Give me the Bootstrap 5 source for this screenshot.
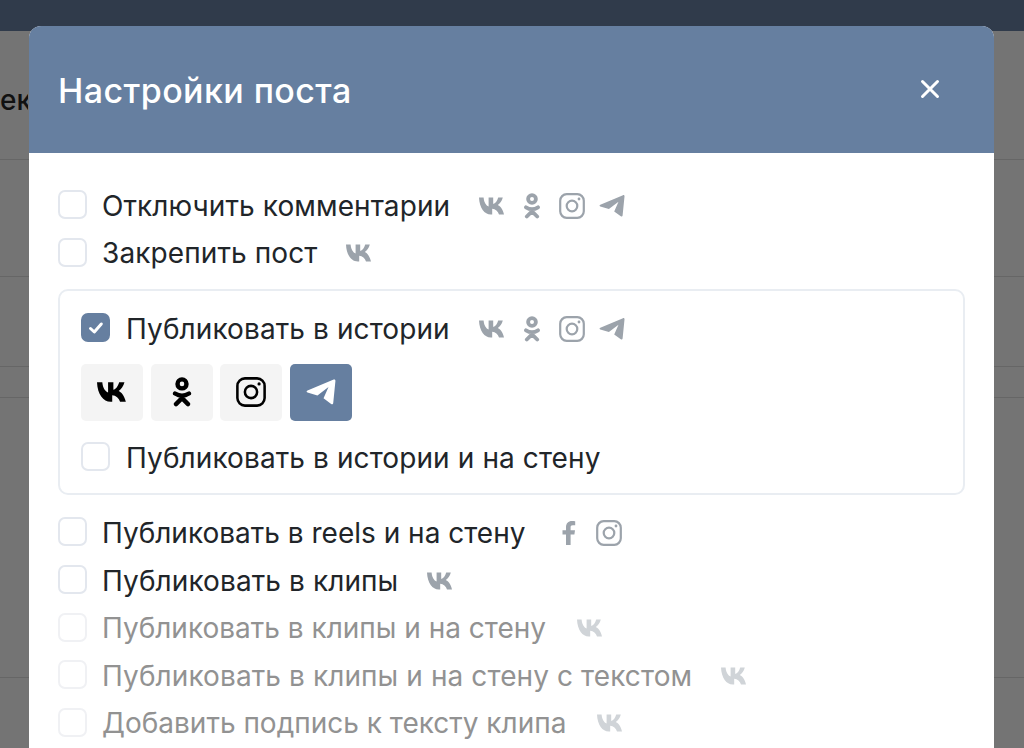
<!DOCTYPE html>
<html lang="ru">
<head>
  <meta charset="UTF-8">
  <title>Настройки поста</title>
  <link href="https://cdn.jsdelivr.net/npm/bootstrap@5.3.2/dist/css/bootstrap.min.css" rel="stylesheet">
  <style>
  html, body {
    height: 100%;
    overflow: hidden;
  }

  body {
    background-color: #747474;
    color: #212529;
    font-family: Inter, "Liberation Sans", sans-serif;
  }

  .top-strip {
    height: 31px;
    background-color: #303b4b;
  }

  .back-word {
    height: 129px;
    padding-top: 48px;
    font-size: 28px;
    font-weight: 500;
    color: #111;
    border-bottom: 1px solid #666;
  }

  .back-word span {
    display: block;
    width: 28px;
    overflow: hidden;
    white-space: nowrap;
  }

  .back-row {
    border-bottom: 1px solid #666;
  }

  .back-row.r1 { height: 117px; }
  .back-row.r2 { height: 90px; }
  .back-row.r3 { height: 31px; }
  .back-row.r4 { height: 280px; }

  .post-dialog {
    top: 26px;
    left: 29px;
    width: 965px;
    height: 800px;
    background-color: #fff;
    border-radius: 12px 12px 0 0;
    overflow: hidden;
  }

  .dialog-head {
    height: 127px;
    padding: 3px 29px 0 29px;
    background-color: #667fa0;
    color: #fff;
  }

  .dialog-head h5 {
    font-size: 34px;
    font-weight: 500;
    letter-spacing: 0.42px;
    margin: 0;
  }

  .close-x {
    margin-right: 25px;
    margin-top: -4px;
  }

  .dialog-body {
    padding: 29px 29px 0 29px;
  }

  .opt-row {
    height: 47.6px;
    font-size: 28px;
    letter-spacing: 0.1px;
    line-height: 1;
  }

  .opt-row.tight {
    letter-spacing: 0;
  }

  .opt-box {
    width: 29px;
    height: 29px;
    flex: none;
    border: 2px solid #e3e7ee;
    border-radius: 7px;
    margin: 0 15px 2px 0;
    background-color: #fff;
  }

  .opt-box.on {
    background-color: #667fa0;
    border-color: #667fa0;
  }

  .opt-row.off {
    color: #929292;
  }

  .opt-row.off .opt-box {
    border-color: #f0f1f4;
  }

  .soc-set {
    margin-left: 29px;
    gap: 14px;
    color: #9ca3ab;
  }

  .opt-row.tight .soc-set {
    margin-left: 31px;
  }

  .opt-row.off .soc-set {
    color: #d0d4d8;
  }

  .soc-set svg {
    width: 26px;
    height: 26px;
    display: block;
  }

  .story-box {
    margin: 12px 0 0 0;
    height: 206px;
    padding: 14px 22px 0 21px;
    border: 2px solid #e9edf2;
    border-radius: 10px;
  }

  .story-box .opt-box {
    margin-right: 16px;
  }

  .net-buttons {
    gap: 7.7px;
    margin: 11px 0 13px;
  }

  .net-btn {
    width: 62px;
    height: 57px;
    padding: 0;
    border: 0;
    border-radius: 5px;
    background-color: #f4f4f4;
    color: #000;
  }

  .net-btn.on {
    background-color: #667fa0;
    color: #fff;
  }

  .net-btn svg {
    width: 30px;
    height: 30px;
  }

  .after-box {
    margin-top: 14px;
  }
  </style>
</head>
<body>

<svg width="0" height="0" class="d-block">
  <defs>
    <symbol id="ic-vk" viewBox="0 0 26 26">
      <path fill="currentColor" d="M0 4.500h4.600c.4 5 2.600 8 5 9v-9h4.600V11c2-.3 4-3 5-6.500h4.600c-.8 3.500-3 6.200-5 7.600 2 1 4.800 3.400 6.200 9.400h-5c-1-3.400-3.600-5.400-6.800-5.700v5.700h-1.400C5.500 21.500.4 15 0 4.500z"/>
    </symbol>
    <symbol id="ic-ok" viewBox="0 0 26 26">
      <circle cx="13" cy="6" r="3.900" fill="none" stroke="currentColor" stroke-width="3.800"/>
      <path fill="none" stroke="currentColor" stroke-width="3.800" stroke-linecap="round" stroke-linejoin="round" d="M7 14.300c3.800 2.400 8.200 2.400 12 0M7.800 23.500l5.200-5.200 5.200 5.200"/>
    </symbol>
    <symbol id="ic-ig" viewBox="0 0 26 26">
      <rect x="1.200" y="1.200" width="23.600" height="23.600" rx="6.500" fill="none" stroke="currentColor" stroke-width="2.200"/>
      <circle cx="13" cy="13" r="5.300" fill="none" stroke="currentColor" stroke-width="2.200"/>
      <circle cx="20" cy="6" r="1.400" fill="currentColor"/>
    </symbol>
    <symbol id="ic-tg" viewBox="0 0 26 26">
      <path fill="currentColor" d="M25.500 3.500 23.600 22.500c-.1 1.100-1 1.300-1.800.8l-6.600-4.800 4.300-9.800-9.600 7.300-8.600-2.500c-1.100-.4-1-1.300 0-1.700L24 2.200c1-.4 1.600.3 1.500 1.300z"/>
    </symbol>
    <symbol id="ic-fb" viewBox="0 0 26 26">
      <path fill="currentColor" d="M10 25V14.500H6.500v-4.200H10V7.200C10 3.500 12.200 1 16 1c1.500 0 2.800.1 3.200.2v4h-2.400c-1.800 0-2.200.9-2.200 2.200v2.900h4.400l-.6 4.200h-3.800V25z"/>
    </symbol>
  </defs>
</svg>

<!-- page behind the dialog -->
<div class="top-strip"></div>
<div class="back-word"><span>ек</span></div>
<div class="back-row r1"></div>
<div class="back-row r2"></div>
<div class="back-row r3"></div>
<div class="back-row r4"></div>

<div class="post-dialog position-absolute">
  <div class="dialog-head d-flex align-items-center justify-content-between">
    <h5>Настройки поста</h5>
    <svg class="close-x" width="20" height="20" viewBox="0 0 20 20"><path d="M2.500 2.500l15 15M17.500 2.500l-15 15" stroke="#fff" stroke-width="3" stroke-linecap="round"/></svg>
  </div>

  <div class="dialog-body">
    <div class="opt-row d-flex align-items-center">
      <span class="opt-box"></span><span>Отключить комментарии</span>
      <span class="soc-set d-flex">
        <svg><use href="#ic-vk"/></svg><svg><use href="#ic-ok"/></svg><svg><use href="#ic-ig"/></svg><svg><use href="#ic-tg"/></svg>
      </span>
    </div>
    <div class="opt-row d-flex align-items-center">
      <span class="opt-box"></span><span>Закрепить пост</span>
      <span class="soc-set d-flex"><svg><use href="#ic-vk"/></svg></span>
    </div>

    <div class="story-box">
      <div class="opt-row d-flex align-items-center">
        <span class="opt-box on d-flex align-items-center justify-content-center">
          <svg width="16" height="14" viewBox="0 0 16 14"><path d="M2.500 7.500l3.800 3.500 7-8" fill="none" stroke="#fff" stroke-width="3" stroke-linecap="round" stroke-linejoin="round"/></svg>
        </span><span>Публиковать в истории</span>
        <span class="soc-set d-flex">
          <svg><use href="#ic-vk"/></svg><svg><use href="#ic-ok"/></svg><svg><use href="#ic-ig"/></svg><svg><use href="#ic-tg"/></svg>
        </span>
      </div>
      <div class="net-buttons d-flex">
        <button class="net-btn btn"><svg><use href="#ic-vk"/></svg></button>
        <button class="net-btn btn"><svg><use href="#ic-ok"/></svg></button>
        <button class="net-btn btn"><svg><use href="#ic-ig"/></svg></button>
        <button class="net-btn btn on"><svg><use href="#ic-tg"/></svg></button>
      </div>
      <div class="opt-row d-flex align-items-center">
        <span class="opt-box"></span><span>Публиковать в истории и на стену</span>
      </div>
    </div>

    <div class="opt-row tight after-box d-flex align-items-center">
      <span class="opt-box"></span><span>Публиковать в reels и на стену</span>
      <span class="soc-set d-flex">
        <svg><use href="#ic-fb"/></svg><svg><use href="#ic-ig"/></svg>
      </span>
    </div>
    <div class="opt-row d-flex align-items-center">
      <span class="opt-box"></span><span>Публиковать в клипы</span>
      <span class="soc-set d-flex"><svg><use href="#ic-vk"/></svg></span>
    </div>
    <div class="opt-row tight off d-flex align-items-center">
      <span class="opt-box"></span><span>Публиковать в клипы и на стену</span>
      <span class="soc-set d-flex"><svg><use href="#ic-vk"/></svg></span>
    </div>
    <div class="opt-row off d-flex align-items-center">
      <span class="opt-box"></span><span>Публиковать в клипы и на стену с текстом</span>
      <span class="soc-set d-flex"><svg><use href="#ic-vk"/></svg></span>
    </div>
    <div class="opt-row tight off d-flex align-items-center">
      <span class="opt-box"></span><span>Добавить подпись к тексту клипа</span>
      <span class="soc-set d-flex"><svg><use href="#ic-vk"/></svg></span>
    </div>
  </div>
</div>

<script src="https://cdn.jsdelivr.net/npm/bootstrap@5.3.2/dist/js/bootstrap.bundle.min.js"></script>
</body>
</html>
